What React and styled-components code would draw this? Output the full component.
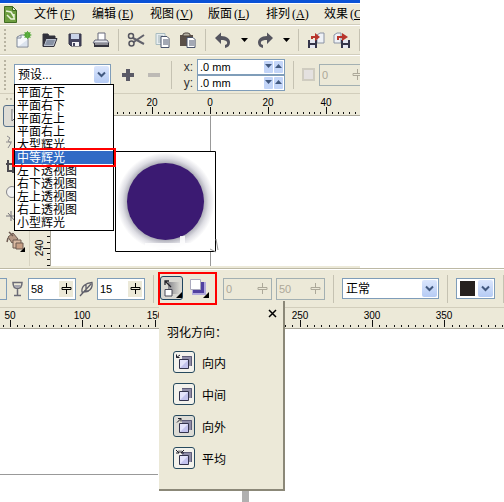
import React from "react";
import styled, { createGlobalStyle, css } from "styled-components";

const GlobalStyle = createGlobalStyle`
  * { box-sizing: border-box; }
  body {
    margin: 0;
    background: #fff;
    color: #000;
    font-family: "Liberation Sans", "Noto Sans CJK SC", sans-serif;
    font-size: 12px;
  }
  button, input, select {
    font: inherit;
    color: inherit;
    margin: 0;
    padding: 0;
  }
`;

const face = "#ece9d8";
const edge = "#7f9db9";

const Page = styled.div`
  min-height: 100vh;
  display: flex;
  flex-direction: column;
  overflow: hidden;
`;

const TopPane = styled.section`
  width: calc(100% - 144px);
  overflow: hidden;
  background: ${face};
`;

const TitleStrip = styled.div`
  height: 3px;
  background: #0a52d6;
`;

const MenuBar = styled.nav`
  height: 22px;
  display: flex;
  align-items: center;
  gap: 17px;
  padding-left: 4px;
  border-top: 1px solid #fff;
  border-bottom: 1px solid #d2cebc;
`;

const MenuItem = styled.button`
  flex: none;
  width: 41px;
  border: 0;
  background: none;
  display: flex;
  align-items: center;
  gap: 2px;
  line-height: 16px;
  white-space: nowrap;
`;

const MenuKey = styled.span`
  font-family: "Liberation Serif", serif;
  font-size: 12px;
`;

const DocIcon = styled.span`
  flex: none;
  width: 13px;
  display: flex;
`;

const Toolbar = styled.div`
  height: ${(p) => p.$height}px;
  display: flex;
  align-items: center;
  gap: 8px;
  padding-left: ${(p) => (p.$flush ? 0 : 4)}px;
  background: ${face};
  border-top: 1px solid #fff;
  border-bottom: 1px solid #d2cebc;
  > * { flex: none; }
`;

const Grip = styled.span`
  width: 2px;
  height: ${(p) => p.$height}px;
  background: repeating-linear-gradient(#b8b4a2 0 2px, transparent 2px 4px);
`;

const Divider = styled.span`
  width: 1px;
  height: ${(p) => p.$height || 22}px;
  background: #c5c2b2;
`;

const IconButton = styled.button`
  width: ${(p) => p.$width || 18}px;
  height: 18px;
  border: 0;
  background: none;
  display: flex;
  align-items: center;
  justify-content: center;
  svg { flex: none; display: block; }
`;

const ComboBox = styled.div`
  position: relative;
  width: ${(p) => p.$width}px;
  height: 21px;
  background: #fff;
  border: 1px solid ${edge};
`;

const ComboSelect = styled.select`
  appearance: none;
  width: 100%;
  height: 100%;
  border: 0;
  outline: 0;
  background: transparent;
  padding-left: 3px;
`;

const ComboArrow = styled.span`
  position: absolute;
  top: 1px;
  right: 1px;
  width: 15px;
  height: 17px;
  border-radius: 2px;
  background: linear-gradient(#dbe6fd, #b5cbf4);
  display: flex;
  align-items: center;
  justify-content: center;
  pointer-events: none;
`;

const Swatch = styled.span`
  position: absolute;
  top: 2px;
  left: 3px;
  width: 15px;
  height: 15px;
  background: #26211f;
  pointer-events: none;
`;

const OptionList = styled.ul`
  position: absolute;
  z-index: 3;
  top: 19px;
  left: -1px;
  width: 100px;
  margin: 0;
  padding: 1px 0;
  list-style: none;
  background: #fff;
  border: 1px solid #000;
`;

const Option = styled.li`
  position: relative;
  height: 13px;
  line-height: 15px;
  padding-left: 2px;
  ${(p) =>
    p.$selected &&
    css`
      z-index: 1;
      background: #316ac5;
      color: #fff;
      &::after {
        content: "";
        position: absolute;
        inset: -3px;
        border: 2px solid #f00;
      }
    `}
`;

const Positions = styled.div`
  display: grid;
  grid-template-columns: 17px 88px;
`;

const AxisLabel = styled.label`
  line-height: 16px;
  text-align: center;
  color: #333;
`;

const AxisField = styled.span`
  display: flex;
  align-items: center;
  gap: 1px;
  height: 16px;
  padding-right: 1px;
  background: #fff;
  border: 1px solid ${edge};
`;

const AxisInput = styled.input`
  flex: 1;
  min-width: 0;
  height: 13px;
  border: 0;
  outline: 0;
  padding-left: 2px;
  background: none;
  font-size: 11px;
`;

const StepButton = styled.button`
  width: 9px;
  height: 12px;
  border: 0;
  border-radius: 1px;
  background: #c3d5f8;
  display: flex;
  align-items: center;
  justify-content: center;
`;

const FieldGroup = styled.div`
  display: flex;
  align-items: center;
  gap: ${(p) => p.$gap}px;
`;

const NumberBox = styled.span`
  flex: none;
  width: ${(p) => p.$width || 48}px;
  height: 22px;
  display: flex;
  align-items: center;
  padding-right: 2px;
  border: 1px solid ${(p) => (p.$disabled ? "#a3b0b2" : edge)};
  background: ${(p) => (p.$disabled ? face : "#fff")};
  color: ${(p) => (p.$disabled ? "#aca899" : "#000")};
`;

const NumberInput = styled.input`
  flex: 1;
  min-width: 0;
  height: 18px;
  border: 0;
  outline: 0;
  padding-left: 2px;
  background: none;
  font-size: 11px;
`;

const SlideButton = styled.button`
  flex: none;
  width: 14px;
  height: 16px;
  border: 0;
  background: ${face};
  display: flex;
  align-items: center;
  justify-content: center;
`;

const CutBox = styled.span`
  width: 7px;
  height: 22px;
  border: 1px solid ${edge};
  border-left: 0;
`;

const FieldIcon = styled.span`
  width: 18px;
  margin-right: -1px;
  display: flex;
  justify-content: center;
`;

const Check = styled.input`
  appearance: none;
  width: 13px;
  height: 13px;
  border: 2px solid #cfccc0;
  background: #e4e1e0;
`;

const Workspace = styled.div`
  display: grid;
  grid-template-columns: 30px 21px 1fr;
  grid-template-rows: 22px 150px;
  border-bottom: 2px solid ${face};
`;

const ToolBox = styled.div`
  grid-row: 1 / 3;
  display: flex;
  flex-direction: column;
  padding: 4px 0 0 3px;
  gap: 5px;
  border-right: 1px solid #d8d4c2;
`;

const ToolGrip = styled.span`
  flex: none;
  width: 24px;
  height: 2px;
  margin-left: 3px;
  background: repeating-linear-gradient(90deg, #c0bcab 0 2px, transparent 2px 4px);
`;

const ToolButton = styled.button`
  flex: none;
  width: 25px;
  height: ${(p) => (p.$active ? 22 : 20)}px;
  border: ${(p) => (p.$active ? "1px solid #56708a" : 0)};
  border-radius: 3px;
  background: ${(p) => (p.$active ? "#dfddd6" : "none")};
  display: flex;
  align-items: center;
  justify-content: flex-start;
`;

const TopRuler = styled.div`
  grid-column: 2 / 4;
  border-bottom: 1px solid #aaa799;
  overflow: hidden;
`;

const SideRuler = styled.div`
  border-right: 1px solid #aaa799;
  overflow: hidden;
`;

const RulerSvg = styled.svg`
  display: block;
  width: 100%;
  height: 100%;
  font-size: 10px;
  text-anchor: middle;
`;

const Canvas = styled.div`
  position: relative;
  flex: 1;
  background: #fff;
  overflow: hidden;
`;

const Guide = styled.span`
  position: absolute;
  top: 0;
  bottom: 0;
  left: 159px;
  width: 1px;
  background: #999;
`;

const Artwork = styled.svg`
  position: absolute;
  left: 64px;
  top: 35px;
`;

const BottomPane = styled.section`
  flex: 1;
  display: flex;
  flex-direction: column;
  border-top: 1px solid #bdb9a5;
`;

const BottomRuler = styled.div`
  height: 21px;
  background: ${face};
  border-bottom: 1px solid #aaa799;
`;

const FeatherGroup = styled.div`
  position: relative;
  width: 59px;
  height: 33px;
  margin: 0 -2px 0 -4px;
  padding: 4px 2px;
  display: flex;
  gap: 4px;
  &::after {
    content: "";
    position: absolute;
    z-index: 2;
    inset: 0;
    border: 2px solid #f00;
    pointer-events: none;
  }
`;

const FeatherButton = styled.button`
  width: 23px;
  height: 24px;
  border: 1px solid ${(p) => (p.$pressed ? "#1f4560" : "transparent")};
  border-radius: 3px;
  background: ${(p) => (p.$pressed ? "#d9d8d2" : "none")};
  display: flex;
  align-items: center;
  justify-content: center;
`;

const Popup = styled.div`
  position: absolute;
  z-index: 1;
  left: 1px;
  top: 29px;
  width: 126px;
  padding: 6px 5px 20px 8px;
  background: ${face};
  border: solid #8b8878;
  border-width: 0 2px 2px 0;
`;

const CloseButton = styled.button`
  display: flex;
  align-items: center;
  justify-content: center;
  width: 12px;
  height: 12px;
  margin-left: auto;
  border: 0;
  background: none;
`;

const PopupTitle = styled.h2`
  margin: 6px 0 10px;
  font-size: 12px;
  font-weight: normal;
  line-height: 16px;
`;

const Directions = styled.div`
  display: flex;
  flex-direction: column;
  gap: 10px;
  padding-left: 6px;
`;

const Direction = styled.button`
  display: flex;
  align-items: center;
  gap: 7px;
  height: 22px;
  border: 0;
  background: none;
`;

const DirectionIcon = styled.span`
  width: 22px;
  height: 22px;
  display: flex;
  align-items: center;
  justify-content: center;
  border: 1px solid #274a5e;
  border-radius: 3px;
  background: ${(p) => (p.$active ? "#dddcd6" : "#f3f2ec")};
`;

const PageEdge = styled.span`
  position: absolute;
  top: 145px;
  left: 0;
  width: 158px;
  height: 1px;
  background: #999;
`;

const PageShadow = styled.span`
  position: absolute;
  top: 162px;
  bottom: 0;
  left: 242px;
  width: 7px;
  background: #b0b0b0;
`;

const menus = [
  ["文件", "F"],
  ["编辑", "E"],
  ["视图", "V"],
  ["版面", "L"],
  ["排列", "A"],
  ["效果", "C"],
];

const presets = [
  "平面左下",
  "平面右下",
  "平面左上",
  "平面右上",
  "大型辉光",
  "中等辉光",
  "左下透视图",
  "右下透视图",
  "左上透视图",
  "右上透视图",
  "小型辉光",
];

const directions = [
  { name: "向内", arrow: "M1.500 4.500L5 2M1.500 1.500v3h3" },
  { name: "中间", arrow: "" },
  { name: "向外", arrow: "M2 5.500l4-4M3 1.500h3v3", active: true },
  { name: "平均", arrow: "M1 1l3 3M4 1.500V4H1M9 1L6 4M6 1.500V4h3" },
];

const Icon = ({ size = 18, children }) => (
  <svg width={size} height={size} viewBox={`0 0 ${size} ${size}`} fill="none" aria-hidden="true">
    {children}
  </svg>
);

const Chevron = () => (
  <svg width="9" height="7" viewBox="0 0 9 7" fill="none">
    <path d="M1 1.5l3.500 3.500L8 1.500" stroke="#42597f" strokeWidth="2" />
  </svg>
);

const Caret = ({ up }) => (
  <svg width="7" height="5" viewBox="0 0 7 5">
    <path d={up ? "M0 4l3.500-4L7 4z" : "M0 0h7L3.500 4z"} fill={up === undefined ? "#000" : "#42597f"} />
  </svg>
);

const SlideGlyph = () => (
  <svg width="11" height="11" viewBox="0 0 11 11" fill="none" stroke="currentColor">
    <path d="M5.500 0v4M5.500 7v4M1 4.500h9v2H1z" />
  </svg>
);

const NewIcon = () => (
  <Icon>
    <path d="M3 6l4-2h7v12H3z" fill="#f6f8fb" stroke="#7d8696" />
    <path d="M3 7h4V4" stroke="#7d8696" />
    <path d="M5 15h8V9z" fill="#dbe3ee" />
    <circle cx="13.500" cy="4" r="3" fill="#48a12c" />
    <path d="M13.500 0v8M9.500 4h8M10.500 1l6 6M16.500 1l-6 6" stroke="#5fae43" />
  </Icon>
);

const OpenIcon = () => (
  <Icon>
    <path d="M3 15V3h5l1 2h6v3" fill="#30303a" stroke="#30303a" />
    <path d="M3 15.500L6 7.500h11l-3 8z" fill="#b9c0ce" stroke="#30303a" />
    <path d="M7 9h8l-2 5H5z" fill="#8791a3" />
  </Icon>
);

const SaveIcon = () => (
  <Icon>
    <path d="M3 3h12v12H5l-2-2z" fill="#45455f" stroke="#343448" />
    <path d="M5 3h8v5H5z" fill="#c9d3e8" />
    <path d="M6 11h7v4H6z" fill="#f2f2f6" />
    <path d="M7 12h2v3H7z" fill="#45455f" />
  </Icon>
);

const PrintIcon = () => (
  <Icon>
    <path d="M6 9V2h7v7" fill="#fff" stroke="#66697a" />
    <path d="M3 9h12l2 3H1z" fill="#e4e6ec" stroke="#66697a" />
    <path d="M2 12h15v4H2z" fill="#34343e" />
    <path d="M3 13h13" stroke="#e5e5eb" />
  </Icon>
);

const CutIcon = () => (
  <Icon>
    <path d="M6 7l11 6M6 11.500L17 4" stroke="#62626c" strokeWidth="2" />
    <circle cx="4" cy="5" r="2.500" stroke="#55555f" strokeWidth="1.500" />
    <circle cx="4.500" cy="12.500" r="2.500" stroke="#55555f" strokeWidth="1.500" />
  </Icon>
);

const CopyIcon = () => (
  <Icon>
    <path d="M3 2.500h9v11H3z" fill="#e7edf0" stroke="#a9bcc0" />
    <path d="M5 5h5M5 7h3M5 9h3M5 11h3" stroke="#9fb1b5" />
    <path d="M8 5.500h6l2 2v9H8z" fill="#fff" stroke="#49536b" />
    <path d="M10 9h5M10 11h5M10 13h5" stroke="#49536b" />
  </Icon>
);

const PasteIcon = () => (
  <Icon>
    <path d="M1 4h13v11H1z" fill="#5b5048" />
    <path d="M4 5V3l2-1h3l2 1v2z" fill="#b6b1a4" stroke="#4e453f" />
    <path d="M8 6.500h6l2 2v8H8z" fill="#fff" stroke="#49536b" />
    <path d="M10 10h5M10 12h5M10 14h5" stroke="#49536b" />
  </Icon>
);

const UndoIcon = () => (
  <Icon>
    <path d="M1 7l6-5.500V5c6 0 9 3 9 6.500 0 3-2 5-5 5.500v-3c2-.5 2.500-1.500 2-3-.6-1.500-3-2-6-2v4z" fill="#55555f" />
  </Icon>
);

const RedoIcon = () => (
  <Icon>
    <path d="M17 7l-6-5.500V5c-6 0-9 3-9 6.500 0 3 2 5 5 5.500v-3c-2-.5-2.500-1.500-2-3 .6-1.500 3-2 6-2v4z" fill="#55555f" />
  </Icon>
);

const Disk = ({ x }) => (
  <g>
    <path d={`M${x} 9h9v8h-9z`} fill="#35354a" />
    <path d={`M${x + 2} 9h5v3h-5zM${x + 2} 14h5v3h-5z`} fill="#e6e8f2" />
  </g>
);

const ImportIcon = () => (
  <Icon>
    <path d="M10 4l3-2h4v10h-7z" fill="#eef1f6" stroke="#8b93a4" />
    <Disk x={1} />
    <path d="M4 8V5h4V2l5 4-5 4V7H6v1z" fill="#b8352b" />
  </Icon>
);

const ExportIcon = () => (
  <Icon>
    <path d="M1 4l3-2h4v10H1z" fill="#eef1f6" stroke="#8b93a4" />
    <Disk x={8} />
    <path d="M4 9V5h5V2l6 4-6 4V7H6v2z" fill="#b8352b" />
  </Icon>
);

const ShadowIcon = ({ arrow }) => (
  <Icon>
    <path d="M7 3h10v10H7z" fill="#8f8da8" />
    <path d="M7 3.500h9.500V13" stroke="#5e5d78" />
    <path d="M4.500 6.500h9v9h-9z" fill="#e4e4fc" stroke="#33334d" />
    <path d="M5 15l8-8v8z" fill="#c3c3ee" />
    {arrow && <path d={arrow} stroke="#1c1c28" />}
  </Icon>
);

const toolIcons = [
  <path key="shape" d="M4 3l3 2-2 3 3 2-3 5M3 9h6" stroke="#8d8b8e" />,
  <path key="crop" d="M5 2v11h6M3 6h7v9" stroke="#4c4a50" strokeWidth="2" />,
  <circle key="zoom" cx="9" cy="9" r="5.500" fill="#f2f2f2" stroke="#85858b" />,
  <path key="smart" d="M8 3v10M3 8h10M5 5l7 8" stroke="#77757a" />,
];

function Ruler({ origin, step, from, to, height, labels }) {
  const ticks = [];
  for (let i = from; i <= to; i++) ticks.push(i);
  return (
    <RulerSvg>
      <path
        d={ticks.map((i) => `M${Math.round(origin + i * step) + 0.5} ${height - (i % 10 ? 2 : 7)}V${height}`).join("")}
        stroke="#111"
      />
      {labels.map(([tick, text]) => (
        <text key={tick} x={Math.round(origin + tick * step)} y={height - 8}>
          {text}
        </text>
      ))}
    </RulerSvg>
  );
}

function NumberField({ label, value, width, disabled }) {
  return (
    <NumberBox $width={width} $disabled={disabled}>
      <NumberInput aria-label={label} defaultValue={value} disabled={disabled} />
      <SlideButton aria-label={`${label} slider`} disabled={disabled}>
        <SlideGlyph />
      </SlideButton>
    </NumberBox>
  );
}

function Axis({ name }) {
  return (
    <>
      <AxisLabel htmlFor={`pos-${name}`}>{name}:</AxisLabel>
      <AxisField>
        <AxisInput id={`pos-${name}`} defaultValue=".0 mm" />
        <StepButton aria-label={`${name} down`}>
          <Caret up={false} />
        </StepButton>
        <StepButton aria-label={`${name} up`}>
          <Caret up />
        </StepButton>
      </AxisField>
    </>
  );
}

function StandardBar() {
  return (
    <Toolbar $height={30}>
      <Grip $height={22} />
      <IconButton aria-label="New"><NewIcon /></IconButton>
      <IconButton aria-label="Open"><OpenIcon /></IconButton>
      <IconButton aria-label="Save"><SaveIcon /></IconButton>
      <IconButton aria-label="Print"><PrintIcon /></IconButton>
      <Divider />
      <IconButton aria-label="Cut"><CutIcon /></IconButton>
      <IconButton aria-label="Copy"><CopyIcon /></IconButton>
      <IconButton aria-label="Paste"><PasteIcon /></IconButton>
      <Divider />
      <IconButton aria-label="Undo"><UndoIcon /></IconButton>
      <IconButton aria-label="Undo list" $width={8}><Caret /></IconButton>
      <IconButton aria-label="Redo"><RedoIcon /></IconButton>
      <IconButton aria-label="Redo list" $width={8}><Caret /></IconButton>
      <Divider />
      <IconButton aria-label="Import"><ImportIcon /></IconButton>
      <IconButton aria-label="Export"><ExportIcon /></IconButton>
      <Divider />
    </Toolbar>
  );
}

function PropertyBar() {
  return (
    <Toolbar $height={39}>
      <Grip $height={30} />
      <ComboBox $width={97}>
        <ComboSelect aria-label="Preset">
          <option>预设...</option>
        </ComboSelect>
        <ComboArrow><Chevron /></ComboArrow>
        <OptionList role="listbox" aria-label="Presets">
          {presets.map((name) => (
            <Option key={name} role="option" aria-selected={name === "中等辉光"} $selected={name === "中等辉光"}>
              {name}
            </Option>
          ))}
        </OptionList>
      </ComboBox>
      <IconButton aria-label="Add preset">
        <Icon><path d="M9 3v12M3 9h12" stroke="#5a5a66" strokeWidth="4" /></Icon>
      </IconButton>
      <IconButton aria-label="Delete preset">
        <Icon><path d="M3 9h12" stroke="#bdbab5" strokeWidth="4" /></Icon>
      </IconButton>
      <Divider $height={28} />
      <Positions>
        <Axis name="x" />
        <Axis name="y" />
      </Positions>
      <Divider $height={28} />
      <FieldGroup $gap={4}>
        <Check type="checkbox" aria-label="Offset" disabled />
        <NumberField label="Offset amount" value="0" width={48} disabled />
      </FieldGroup>
    </Toolbar>
  );
}

function Tools() {
  return (
    <ToolBox>
      <ToolGrip />
      <ToolButton $active aria-label="Pick">
        <Icon><path d="M8 2v12l3-3 2 4" fill="#fff" stroke="#6a6a70" /></Icon>
      </ToolButton>
      {toolIcons.map((shape) => (
        <ToolButton key={shape.key} aria-label={shape.key}>
          <Icon>{shape}</Icon>
        </ToolButton>
      ))}
      <ToolButton aria-label="Fill">
        <Icon size={24}>
          <path d="M5 7l5-4 5 6-6 4z" fill="#b79a86" stroke="#6c5a50" />
          <path d="M5 8l-1 4M6 2l4 4" stroke="#6c5a50" strokeWidth="1.500" />
          <path d="M10 10h8v8h-8z" fill="#d8b9a2" stroke="#6c5a50" />
          <path d="M13 13h7v6h-7z" fill="#c79f85" stroke="#6c5a50" />
          <path d="M22 17v5h-5z" fill="#000" />
        </Icon>
      </ToolButton>
    </ToolBox>
  );
}

function Drawing() {
  return (
    <Canvas>
      <Guide />
      <Artwork width="106" height="102" viewBox="0 0 106 102">
        <defs>
          <radialGradient id="glow">
            <stop offset="0.76" stopColor="#a2a2ae" />
            <stop offset="0.88" stopColor="#deDEe4" />
            <stop offset="1" stopColor="#fff" />
          </radialGradient>
        </defs>
        <path d="M.5.5h100v100H.5z" fill="#fff" stroke="#000" />
        <circle cx="50.500" cy="50.500" r="49" fill="url(#glow)" />
        <circle cx="50.500" cy="50.500" r="38.500" fill="#3b1a72" />
        <path d="M30 92h35V85h5v7h28v6H30z" fill="#fff" opacity=".85" />
        <path d="M101 88l2 11M95 98l6 3" stroke="#999" fill="none" />
      </Artwork>
    </Canvas>
  );
}

function FeatherPopup() {
  return (
    <Popup role="dialog" aria-labelledby="feather-title">
      <CloseButton aria-label="Close">
        <svg width="9" height="9" viewBox="0 0 9 9">
          <path d="M1 1l7 7M8 1L1 8" stroke="#000" strokeWidth="1.500" />
        </svg>
      </CloseButton>
      <PopupTitle id="feather-title">羽化方向：</PopupTitle>
      <Directions>
        {directions.map((d) => (
          <Direction key={d.name}>
            <DirectionIcon $active={d.active}>
              <ShadowIcon arrow={d.arrow} />
            </DirectionIcon>
            {d.name}
          </Direction>
        ))}
      </Directions>
    </Popup>
  );
}

function ShadowBar() {
  return (
    <Toolbar $height={39} $flush>
      <FieldGroup $gap={2}>
        <CutBox />
        <FieldIcon>
          <Icon>
            <path d="M4 2.500h9c0 4-1 6-4.500 6S4 6.500 4 2.500zM8.500 9v6M5 15.500h7" stroke="#6b6b76" strokeWidth="1.500" />
            <path d="M5 5h7c-1 2-2 3-3.500 3S6 7 5 5z" fill="#a5a5b0" />
          </Icon>
        </FieldIcon>
        <NumberField label="Opacity" value="58" />
        <FieldIcon>
          <Icon>
            <path d="M4 12C3 6 8 3 14 2.500c1 6-3 10-10 9.500zM2 16L13 4M8 9V5M6 11h5" stroke="#5e5e69" strokeWidth="1.300" />
          </Icon>
        </FieldIcon>
        <NumberField label="Feathering" value="15" />
      </FieldGroup>
      <Divider $height={28} />
      <FeatherGroup>
        <FeatherButton $pressed aria-label="Feather direction">
          <Icon size={20}>
            <defs>
              <linearGradient id="fade">
                <stop offset="0" stopColor="#85858b" />
                <stop offset="1" stopColor="#d9d8d2" />
              </linearGradient>
            </defs>
            <path d="M6 4h12v12H6z" fill="url(#fade)" />
            <path d="M3 11.500h7V18H3z" fill="#fff" stroke="#4a4a58" />
            <path d="M9 9L3 3M3 7V3h4" stroke="#22222a" strokeWidth="1.300" />
            <path d="M20 14v6h-6z" fill="#000" />
          </Icon>
        </FeatherButton>
        <FeatherButton aria-label="Feather edges">
          <Icon size={20}>
            <path d="M3 4h14v13H3z" fill="#b3aadd" />
            <path d="M4 4h11v11H4z" fill="#5141a0" />
            <path d="M1.500 1.500h10v10h-10z" fill="#fff" stroke="#aaa9bd" />
            <path d="M20 14v6h-6z" fill="#000" />
          </Icon>
        </FeatherButton>
        <FeatherPopup />
      </FeatherGroup>
      <FieldGroup $gap={4}>
        <NumberField label="Fade" value="0" width={49} disabled />
        <NumberField label="Stretch" value="50" width={49} disabled />
      </FieldGroup>
      <Divider $height={28} />
      <ComboBox $width={97}>
        <ComboSelect aria-label="Shadow mode">
          <option>正常</option>
        </ComboSelect>
        <ComboArrow><Chevron /></ComboArrow>
      </ComboBox>
      <Divider $height={28} />
      <ComboBox $width={39}>
        <ComboSelect aria-label="Shadow color" />
        <Swatch />
        <ComboArrow><Chevron /></ComboArrow>
      </ComboBox>
      <Divider $height={28} />
    </Toolbar>
  );
}

export default function App() {
  return (
    <Page>
      <GlobalStyle />
      <TopPane>
        <TitleStrip />
        <MenuBar>
          <DocIcon>
            <svg width="13" height="17" viewBox="0 0 13 17">
              <path d="M.5.5h8l4 4v12H.5z" fill="#6d9d3f" stroke="#3f6b22" />
              <path d="M8.500.5v4h4z" fill="#e6f0d8" stroke="#3f6b22" />
              <path d="M2 5l5 1 3 5M3 9l4 4h4M10 8v5" fill="none" stroke="#e8f2d8" strokeWidth="1.500" />
            </svg>
          </DocIcon>
          {menus.map(([name, key]) => (
            <MenuItem key={key}>
              {name}
              <MenuKey>(<u>{key}</u>)</MenuKey>
            </MenuItem>
          ))}
        </MenuBar>
        <StandardBar />
        <PropertyBar />
        <Workspace>
          <Tools />
          <TopRuler>
            <Ruler
              origin={180}
              step={5.8}
              from={-25}
              to={60}
              height={20}
              labels={[[-10, "20"], [0, "0"], [10, "20"], [20, "40"]]}
            />
          </TopRuler>
          <SideRuler>
            <RulerSvg>
              <path
                d={Array.from({ length: 27 }, (_, i) => `M${i === 22 ? 13 : 17} ${Math.round(i * 5.8) + 4.5}H20`).join("")}
                stroke="#111"
              />
              <text transform="translate(13 132) rotate(-90)">240</text>
            </RulerSvg>
          </SideRuler>
          <Drawing />
        </Workspace>
      </TopPane>
      <BottomPane>
        <ShadowBar />
        <BottomRuler>
          <Ruler
            origin={10}
            step={7.24}
            from={-1}
            to={200}
            height={19}
            labels={[[0, "50"], [10, "100"], [20, "150"], [30, "200"], [40, "250"], [50, "300"], [60, "350"]]}
          />
        </BottomRuler>
        <Canvas>
          <PageEdge />
          <PageShadow />
        </Canvas>
      </BottomPane>
    </Page>
  );
}
